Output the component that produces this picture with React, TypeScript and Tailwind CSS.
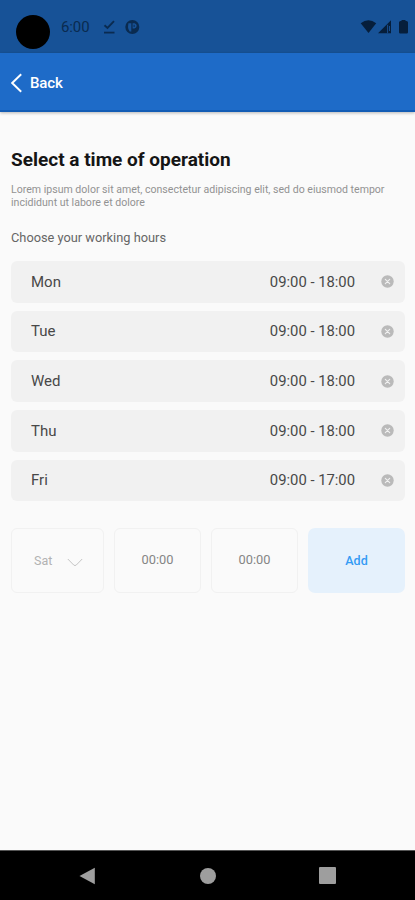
const hours = [
  { day: 'Mon', time: '09:00 - 18:00' },
  { day: 'Tue', time: '09:00 - 18:00' },
  { day: 'Wed', time: '09:00 - 18:00' },
  { day: 'Thu', time: '09:00 - 18:00' },
  { day: 'Fri', time: '09:00 - 17:00' },
];

function StatusBar() {
  return (
    <div className="flex h-[53px] shrink-0 items-start bg-[#175297] text-[#0a2b50]">
      <div className="ml-4 mt-[15px] size-[34px] rounded-full bg-black" />
      <span className="ml-[11px] mt-[17px] w-[30px] whitespace-nowrap text-[15px] leading-5 tracking-[-0.1px]">6:00</span>
      <svg className="ml-[12px] mt-[20px]" width="12" height="14" viewBox="0 0 12 14" fill="none" stroke="currentColor">
        <path d="M1.5 5.2 4.5 8 11 1.2" strokeWidth="1.9" />
        <path d="M1 12.6h10.5" strokeWidth="1.8" />
      </svg>
      <svg className="ml-[10px] mt-[20px]" width="15" height="15" viewBox="0 0 15 15">
        <circle cx="7.3" cy="7" r="7" fill="currentColor" />
        <path d="M3.4 3.2h2.9v8.2H4.7Q3 9.6 3 7ZM7.6 3.2h2q2.1.5 2.1 2.6T9.4 8.6H7.6Z" fill="#175297" />
        <path d="M9.1 4.8v2.2" stroke="currentColor" strokeWidth="1" />
      </svg>
      <div className="ml-auto mr-[7px] mt-[20px] flex items-start text-[#061e3b]">
        <svg width="17" height="14" viewBox="0 0 17 14" fill="currentColor">
          <path d="M.7 3.3Q8.4-2.7 16.2 3.3L8.5 13Z" />
        </svg>
        <svg className="ml-px" width="14" height="14" viewBox="0 0 14 14">
          <path d="M0 13.2 13 .3v12.9Z" fill="currentColor" />
          <path d="M9.6 4.8v8.4M11.5 6v5" stroke="#175297" strokeWidth=".9" />
        </svg>
        <svg className="ml-[7px]" width="9" height="14" viewBox="0 0 9 14" fill="currentColor">
          <path d="M2.5 1V0h4v1h1Q9 1 9 2.5v9.7q0 1.3-1.3 1.3H1.3Q0 13.5 0 12.2V2.5Q0 1 1.5 1Z" />
        </svg>
      </div>
    </div>
  );
}

function RemoveIcon() {
  return (
    <svg width="13" height="13" viewBox="0 0 13 13">
      <circle cx="6.5" cy="6.5" r="6.2" fill="#bababa" />
      <path d="m4.3 4.3 4.4 4.4m0-4.4L4.3 8.7" stroke="#f1f1f1" strokeWidth="1.1" strokeLinecap="round" />
    </svg>
  );
}

export default function App() {
  return (
    <div className="flex h-[900px] w-full flex-col overflow-hidden bg-[#fafafa] font-['Roboto',sans-serif]">
      <StatusBar />
      <header className="flex h-[59px] shrink-0 items-center border-b-2 border-[#125cb5] bg-[#1e6bc8] pl-[11px] pt-[2px] text-white shadow-[0_1px_3px_rgba(0,0,0,0.28)]">
        <svg width="12" height="20" viewBox="0 0 12 20" fill="none" stroke="currentColor" strokeWidth="1.9">
          <path d="M10.2 1.2 1.2 10l9 8.8" />
        </svg>
        <span className="ml-[7px] text-[15px] font-medium leading-5 tracking-[-0.1px]">Back</span>
      </header>
      <main className="flex-1 px-[11px] pt-[36px]">
        <h1 className="whitespace-nowrap text-[19px] font-bold leading-6 text-[#151515]">Select a time of operation</h1>
        <p className="mt-[12px] whitespace-nowrap text-[10.57px] leading-[12.5px] text-[#929292]">
          Lorem ipsum dolor sit amet, consectetur adipiscing elit, sed do eiusmod tempor
          <br />
          incididunt ut labore et dolore
        </p>
        <h2 className="mt-[20px] text-[12.8px] leading-[18px] text-[#666]">Choose your working hours</h2>
        <ul className="mt-[14px] flex flex-col gap-[8.2px]">
          {hours.map(({ day, time }) => (
            <li key={day} className="mr-[-1px] flex h-[41.5px] items-center rounded-[6px] bg-[#f1f1f1] pl-5 pr-[11px] text-[15px] text-[#484848]">
              <span>{day}</span>
              <span className="ml-auto mr-[26px] text-[14.8px]">{time}</span>
              <RemoveIcon />
            </li>
          ))}
        </ul>
        <div className="mr-[-1px] mt-[27px] flex h-[65px] text-[12.5px]">
          <div className="flex w-[93px] items-center rounded-[6px] border border-[#f1f1f1] pl-[22px] pt-px text-[#b2b2b2]">
            <span>Sat</span>
            <svg className="ml-[15px] mt-[2px]" width="16" height="9" viewBox="0 0 16 9" fill="none" stroke="#c4c4c4" strokeWidth="1">
              <path d="m.8 1 5.9 6q1.3 1.2 2.6 0l5.9-6" />
            </svg>
          </div>
          <div className="ml-[10px] flex w-[87px] items-center justify-center rounded-[6px] border border-[#f1f1f1] pb-[2px] text-[12.8px] text-[#858585]">00:00</div>
          <div className="ml-[10px] flex w-[87px] items-center justify-center rounded-[6px] border border-[#f1f1f1] pb-[2px] text-[12.8px] text-[#858585]">00:00</div>
          <button className="ml-[10px] flex-1 rounded-[7px] bg-[#e5f1fc] pt-px font-medium text-[#349bf4]">Add</button>
        </div>
      </main>
      <nav className="flex h-[50px] shrink-0 items-center border-t border-[#555] bg-black pl-[79px] text-[#9e9e9e]">
        <svg width="17" height="18" viewBox="0 0 17 18" fill="currentColor"><path d="M15.8.8v16.4L.5 9Z" /></svg>
        <div className="ml-[104px] size-4 rounded-full bg-current" />
        <div className="ml-[103px] size-[17px] rounded-[1px] bg-current" />
      </nav>
    </div>
  );
}
